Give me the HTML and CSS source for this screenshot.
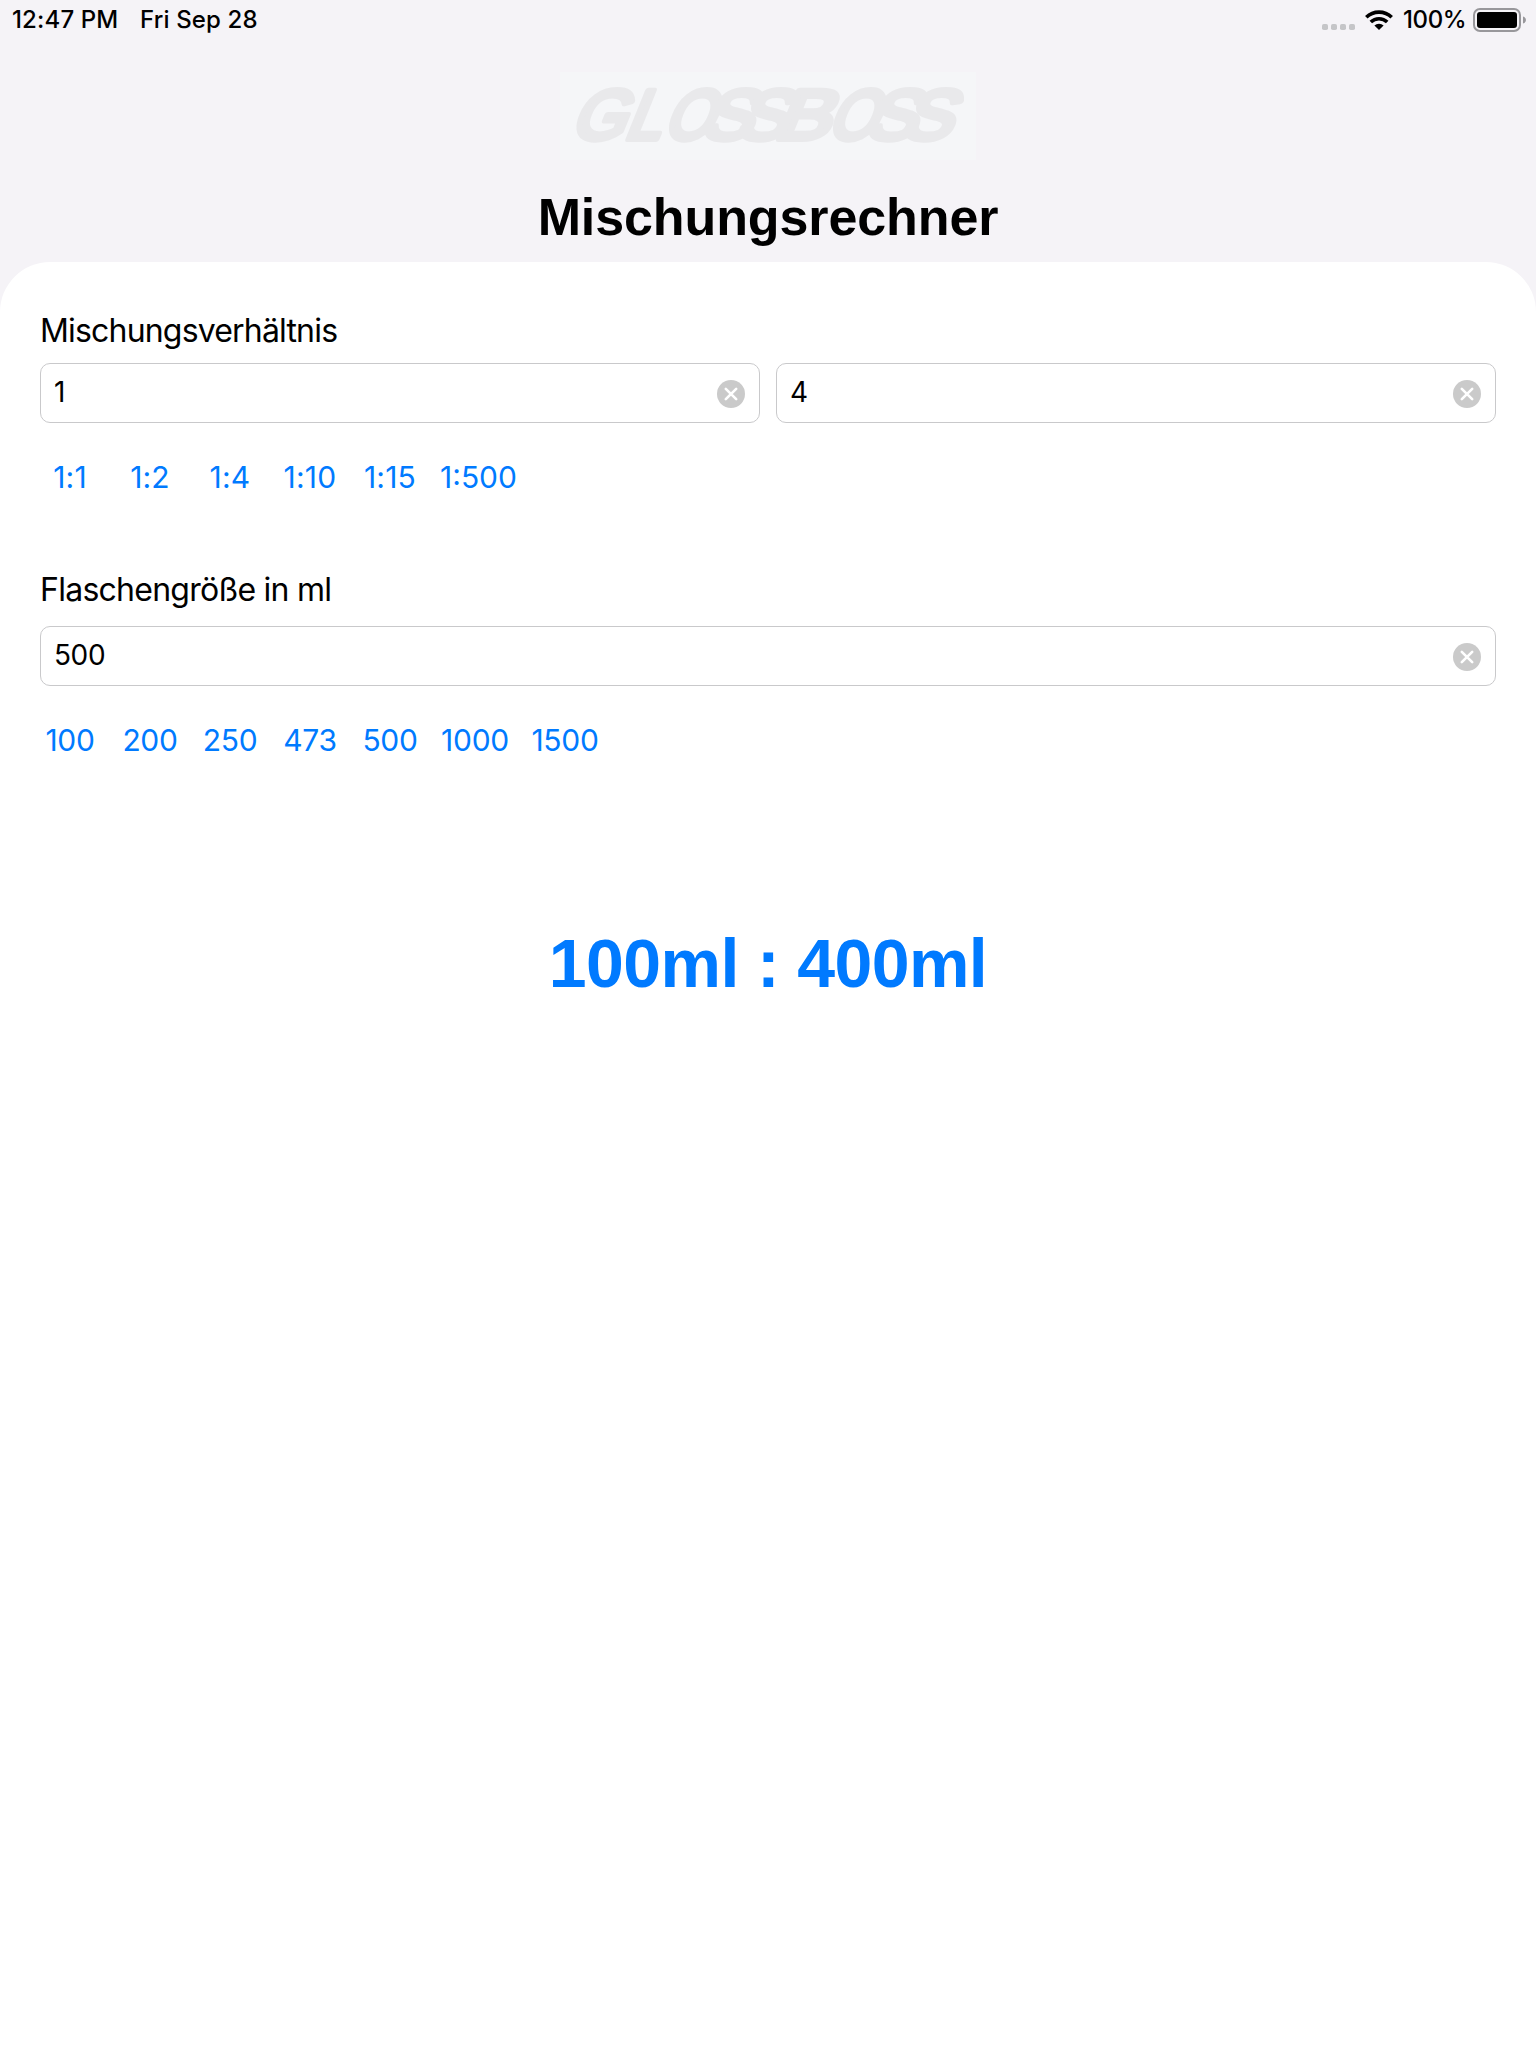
FILE: index.html
```html
<!DOCTYPE html>
<html lang="de">
<head>
<meta charset="utf-8">
<title>Mischungsrechner</title>
<link rel="stylesheet" href="styles.css">
</head>
<body>
<header class="header">
  <div class="status">
    <span class="time">12:47 PM</span>
    <span class="date">Fri Sep 28</span>
    <svg class="signal" width="34" height="6" fill="#c5c5c8"><rect width="6" height="6" rx="1.8"/><rect x="9" width="6" height="6" rx="1.8"/><rect x="18" width="6" height="6" rx="1.8"/><rect x="27" width="6" height="6" rx="1.8"/></svg>
    <svg class="wifi" width="28" height="20" viewBox="0 0 28 20"><g fill="none" stroke="#000" stroke-width="3.6"><path d="M1.3 7.2A18.3 18.3 0 0 1 26.7 7.2"/><path d="M5.8 12A11.8 11.8 0 0 1 22.2 12"/></g><path d="M9.4 15.6A6.6 6.6 0 0 1 18.6 15.6L14 20Z"/></svg>
    <span class="percent">100%</span>
    <svg class="battery" width="54" height="24" viewBox="0 0 54 24"><rect x="1" y="1" width="46" height="22" rx="6" fill="none" stroke="#98979b" stroke-width="2"/><rect x="4" y="4" width="40" height="16" rx="3"/><path d="M50 8.5Q53 9.5 53 12T50 15.5Z" fill="#98979b"/></svg>
  </div>
  <svg class="logo" width="416" height="88" viewBox="0 0 416 88" role="img" aria-label="GLOSSBOSS">
    <g class="logo-text" transform="translate(0 67) skewX(-22)">
      <text x="9" textLength="54" lengthAdjust="spacingAndGlyphs">G</text>
      <text x="63" textLength="36" lengthAdjust="spacingAndGlyphs">L</text>
      <text x="102" textLength="48" lengthAdjust="spacingAndGlyphs">O</text>
      <text x="140" textLength="50" lengthAdjust="spacingAndGlyphs">S</text>
      <text x="175" textLength="50" lengthAdjust="spacingAndGlyphs">S</text>
      <text x="213" textLength="55" lengthAdjust="spacingAndGlyphs">B</text>
      <text x="266" textLength="48" lengthAdjust="spacingAndGlyphs">O</text>
      <text x="304" textLength="50" lengthAdjust="spacingAndGlyphs">S</text>
      <text x="340" textLength="50" lengthAdjust="spacingAndGlyphs">S</text>
    </g>
  </svg>
  <h1 class="title">Mischungsrechner</h1>
</header>
<main class="card">
  <section class="group">
    <h2 class="label ratio-label">Mischungsverhältnis</h2>
    <div class="fields">
      <div class="field"><span>1</span><svg class="clear" width="28" height="28" viewBox="0 0 28 28"><circle cx="14" cy="14" r="14"/><path d="M8.8 8.8 19.2 19.2M19.2 8.8 8.8 19.2"/></svg></div>
      <div class="field"><span>4</span><svg class="clear" width="28" height="28" viewBox="0 0 28 28"><circle cx="14" cy="14" r="14"/><path d="M8.8 8.8 19.2 19.2M19.2 8.8 8.8 19.2"/></svg></div>
    </div>
    <div class="chips ratios"><span>1:1</span><span>1:2</span><span>1:4</span><span>1:10</span><span>1:15</span><span class="wide">1:500</span></div>
  </section>
  <section class="group size-group">
    <h2 class="label size-label">Flaschengröße in ml</h2>
    <div class="fields">
      <div class="field"><span>500</span><svg class="clear" width="28" height="28" viewBox="0 0 28 28"><circle cx="14" cy="14" r="14"/><path d="M8.8 8.8 19.2 19.2M19.2 8.8 8.8 19.2"/></svg></div>
    </div>
    <div class="chips sizes"><span>100</span><span>200</span><span>250</span><span>473</span><span>500</span><span class="thousand">1000</span><span class="thousand">1500</span></div>
  </section>
  <p class="result">100ml : 400ml</p>
</main>
</body>
</html>
```

FILE: styles.css
```css
* { box-sizing: border-box; }
body {
  margin: 0;
  min-height: 2048px;
  background: #f5f3f7;
  color: #000;
  font-family: Inter, "Liberation Sans", sans-serif;
  display: flex;
  flex-direction: column;
}
.header {
  height: 262px;
  display: flex;
  flex-direction: column;
  align-items: center;
}
.status {
  width: 100%;
  height: 40px;
  padding: 0 9px 0 12px;
  display: flex;
  align-items: center;
  font-size: 24px;
  font-weight: 500;
  line-height: 40px;
}
.time { width: 128px; letter-spacing: 0.15px; white-space: nowrap; }
.date { letter-spacing: 0.15px; }
.signal { margin: 14px 9px 0 auto; }
.wifi { margin-right: 10px; }
.percent { width: 70px; letter-spacing: -0.4px; }
.battery { flex: none; }
.logo { margin-top: 32px; background: #f5f6f8; }
.logo-text {
  font: 70px "Liberation Sans", sans-serif;
  fill: #e9e9eb;
  stroke: #e9e9eb;
  stroke-width: 6px;
  stroke-linejoin: round;
}
.title {
  margin: 27px 0 0;
  font: bold 52px/60px "Liberation Sans", sans-serif;
  letter-spacing: -0.1px;
}
.card {
  flex: 1;
  padding: 49px 40px 0;
  background: #fff;
  border-radius: 50px 50px 0 0;
}
.label {
  margin: 0 0 12px;
  height: 40px;
  font-size: 32px;
  font-weight: 400;
  line-height: 40px;
}
.ratio-label { letter-spacing: -0.82px; }
.size-label { margin-bottom: 16px; letter-spacing: -0.74px; }
.fields { display: flex; gap: 16px; }
.field {
  flex: 1;
  height: 60px;
  padding: 0 14px 0 13px;
  display: flex;
  align-items: center;
  justify-content: space-between;
  border: 1px solid #c9c9cb;
  border-radius: 10px;
  font-size: 28px;
  line-height: 56px;
  letter-spacing: -0.4px;
}
.field span { margin-top: -2px; }
.clear { margin-top: 2px; fill: #cacaca; }
.clear path { stroke: #fff; stroke-width: 2.6; stroke-linecap: round; }
.chips {
  margin-top: 34px;
  display: flex;
  gap: 20px;
  color: #007aff;
  font-size: 30px;
  line-height: 40px;
}
.chips span { width: 60px; display: flex; justify-content: center; white-space: nowrap; }
.ratios { letter-spacing: 0.2px; }
.sizes { letter-spacing: -0.3px; }
.chips .wide { width: 77px; letter-spacing: 0; }
.chips .thousand { width: 70px; }
.size-group { margin-top: 73px; }
.result {
  margin: 163px 0 0;
  text-align: center;
  color: #007aff;
  font: bold 68px/80px "Liberation Sans", sans-serif;
  letter-spacing: -0.6px;
}
```
